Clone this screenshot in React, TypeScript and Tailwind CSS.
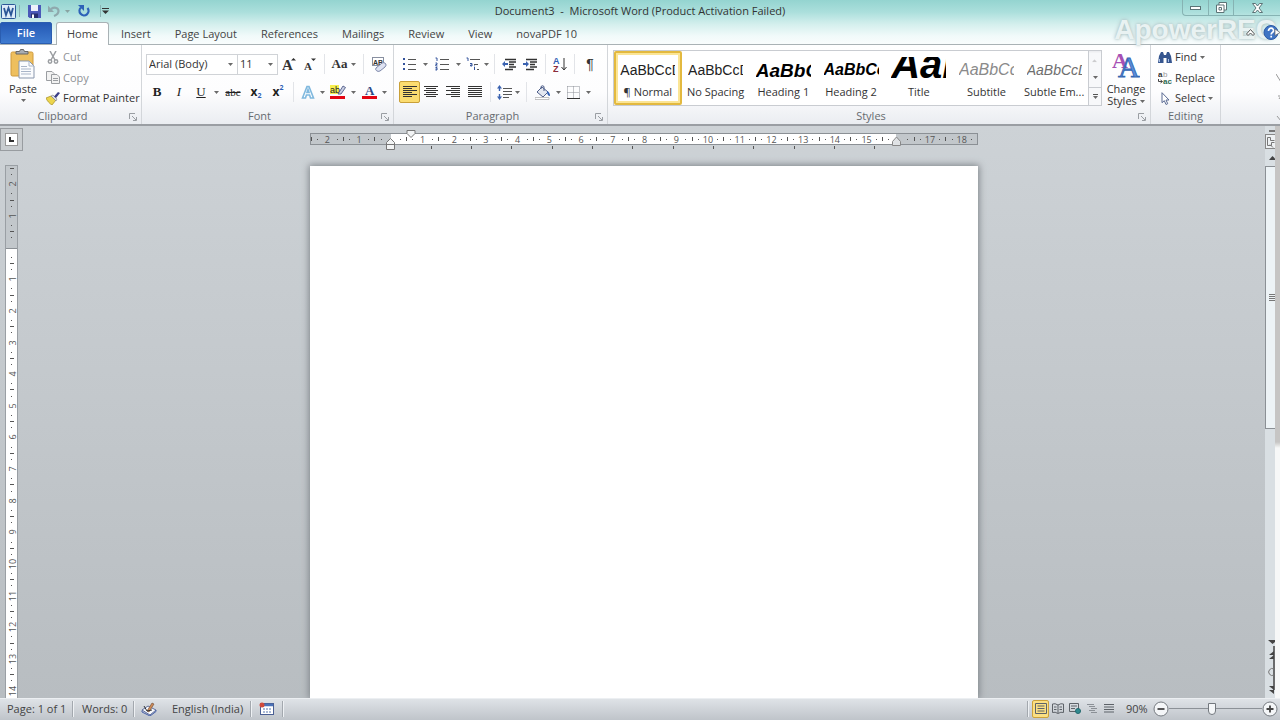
import type { ReactNode } from "react";
import clsx from "clsx";

const tabs = ["Insert", "Page Layout", "References", "Mailings", "Review", "View", "novaPDF 10"];

const styles = [
  { name: "¶ Normal", sample: "AaBbCcDd", look: "text-[14px] text-[#222]", active: true },
  { name: "No Spacing", sample: "AaBbCcDd", look: "text-[14px] text-[#222]" },
  { name: "Heading 1", sample: "AaBbCc", look: "text-[19px] font-bold italic text-black" },
  { name: "Heading 2", sample: "AaBbCc", look: "text-[16px] font-bold italic text-black" },
  { name: "Title", sample: "AaBb", look: "pb-3 text-[40px] font-bold italic text-black" },
  { name: "Subtitle", sample: "AaBbCc", look: "text-[16px] italic text-[#8a8a8a]" },
  { name: "Subtle Em...", sample: "AaBbCcDd", look: "text-[14px] italic text-[#6e6e6e]" },
];

const rulerLabels = ["2", "1", "", "1", "2", "3", "4", "5", "6", "7", "8", "9", "10", "11", "12", "13", "14", "15", "", "17", "18"];
const sideLabels = ["2", "1", "", "1", "2", "3", "4", "5", "6", "7", "8", "9", "10", "11", "12", "13", "14"];

const Caret = () => (
  <svg className="shrink-0" width="5" height="3" viewBox="0 0 5 3" aria-hidden="true">
    <path d="M0 0h5L2.500 3z" fill="#6a6a6a" />
  </svg>
);

const Sep = () => <span className="mx-1 h-5 w-px shrink-0 bg-[#e2e4e8]" />;

const Tool = ({ label, className, children }: { label: string; className?: string; children: ReactNode }) => (
  <button aria-label={label} className={clsx("flex h-[22px] shrink-0 items-center justify-center", className || "w-[22px]")}>
    {children}
  </button>
);

const DropArrow = ({ label, className }: { label: string; className?: string }) => (
  <Tool label={label} className={className || "w-[11px]"}>
    <Caret />
  </Tool>
);

const Launcher = () => (
  <button aria-label="More options" className="absolute right-1 bottom-[3px]">
    <svg width="8" height="8" viewBox="0 0 8 8" fill="none" stroke="#9a9ea3">
      <path d="M.5 6V.5H6M3 3l4 4M7.500 4v3.500H4" />
    </svg>
  </button>
);

type GroupProps = { title: string; launcher?: boolean; className?: string; body?: string; children: ReactNode };

const Group = ({ title, launcher = true, className, body, children }: GroupProps) => (
  <section className={clsx("relative flex h-full shrink-0 flex-col border-r border-[#d3d6da]", className)}>
    <div className={clsx("flex-1", body)}>{children}</div>
    <h2 className={clsx("h-4 text-center leading-4 text-[#666b70]", launcher && "pr-4")}>{title}</h2>
    {launcher && <Launcher />}
  </section>
);

const Lines = ({ rows }: { rows: [number, number][] }) => (
  <svg width="14" height="12" viewBox="0 0 14 12" stroke="#333" aria-hidden="true">
    {rows.map(([a, b], i) => (
      <path key={i} d={`M${a} ${i * 2 + 0.5}H${b}`} />
    ))}
  </svg>
);

const ListIcon = ({ kind }: { kind: "bullet" | "number" | "multi" }) => (
  <svg width="14" height="14" viewBox="0 0 14 14" aria-hidden="true">
    {kind === "bullet" && (
      <>
        <path d="M5 2.500h8M5 7.500h8M5 12.500h8" stroke="#555" />
        <path d="M0 1h2v2H0zM0 6h2v2H0zM0 11h2v2H0z" fill="#33539c" />
      </>
    )}
    {kind === "number" && (
      <>
        <path d="M5 2.500h9M5 7.500h9M5 12.500h9" stroke="#555" />
        <path d="M.5 1H2v3M.5 6H2v1.500H.8V9H2.500M.5 10.500H2V13H.5M.5 12H2" stroke="#33539c" fill="none" />
      </>
    )}
    {kind === "multi" && (
      <>
        <path d="M4 2.500h10M8 7.500h4M11 12.500h2" stroke="#555" />
        <path d="M.5 1H2v3M4 6.500h2v2.500H4.500V8H6M8.500 10v3M8.500 8.500v.8" stroke="#33539c" fill="none" />
      </>
    )}
  </svg>
);

const IndentIcon = ({ out }: { out?: boolean }) => (
  <svg width="15" height="13" viewBox="0 0 15 13" aria-hidden="true">
    <path d="M3 1.500h11M7 4h7M7 6.500h5M7 9h7M3 11.500h8" stroke="#333" strokeWidth="1.300" />
    {out ? <path d="M0 6l3-3v2h3v2H3v2z" fill="#3a62b0" /> : <path d="M6 6L3 3v2H0v2h3v2z" fill="#3a62b0" />}
  </svg>
);

const FontPicker = ({ label, value, className }: { label: string; value: string; className: string }) => (
  <div className={clsx("relative h-[21px] border border-[#d0d3d7] bg-white", className)}>
    <select aria-label={label} className="block h-full w-full appearance-none bg-transparent pl-[2px] outline-none">
      <option>{value}</option>
    </select>
    <span className="pointer-events-none absolute top-2 right-1">
      <Caret />
    </span>
  </div>
);

const TitleBar = () => (
  <div className="relative flex h-[22px] items-center">
    <div className="flex items-center pl-[1px]">
      <svg width="15" height="15" viewBox="0 0 15 15" aria-hidden="true">
        <rect x=".5" y=".5" width="14" height="14" rx="1" fill="#dcebf8" stroke="#2b5797" />
        <path d="M3 4l2 7 2.500-7L10 11l2-7" fill="none" stroke="#2b5797" strokeWidth="1.800" />
      </svg>
      <span className="mx-[3px] h-3 w-px bg-[#8ab5b5]" />
      <Tool label="Save">
        <svg width="13" height="13" viewBox="0 0 13 13">
          <path d="M0 0h13v13H1.500L0 11.500z" fill="#4a59b8" />
          <path d="M3 0h7v6H3z" fill="#eef2fb" />
          <path d="M3 8.500h7V13H3z" fill="#26306f" />
          <path d="M4 9.500h2V13H4z" fill="#fff" />
        </svg>
      </Tool>
      <Tool label="Undo" className="w-[18px]">
        <svg width="12" height="12" viewBox="0 0 12 12" fill="none">
          <path d="M3 4C7 1.500 10.500 3 10.500 6c0 2.500-2 4-4.500 5" stroke="#8fa9ad" strokeWidth="2.200" />
          <path d="M0 .5v6.500h6z" fill="#8fa9ad" />
        </svg>
      </Tool>
      <span className="opacity-50">
        <DropArrow label="Undo history" className="w-[9px]" />
      </span>
      <Tool label="Repeat" className="w-6">
        <svg width="12" height="13" viewBox="0 0 12 13" fill="none">
          <path d="M3 2.500A4.500 4.500 0 1 0 9.500 3" stroke="#2e62b8" strokeWidth="2.300" />
          <path d="M0 0h6v6z" fill="#2e62b8" />
        </svg>
      </Tool>
      <span className="ml-1 h-3 w-px bg-[#8ab5b5]" />
      <Tool label="Customize toolbar" className="w-2">
        <svg width="7" height="6" viewBox="0 0 7 6">
          <path d="M0 .5h7" stroke="#333" />
          <path d="M0 2.500h7L3.500 6z" fill="#333" />
        </svg>
      </Tool>
    </div>
    <h1 className="absolute inset-x-0 text-center whitespace-pre text-[#333]">Document3  -  Microsoft Word (Product Activation Failed)</h1>
    <div className="absolute top-0 right-0 flex h-4 w-[98px] rounded-bl border-b border-l border-[#86b3b3]">
      <button aria-label="Minimize" className="flex w-[26px] items-center justify-center border-r border-[#86b3b3]">
        <svg width="11" height="4" viewBox="0 0 11 4">
          <rect x=".5" y=".5" width="10" height="3" fill="#fff" stroke="#5c7376" />
        </svg>
      </button>
      <button aria-label="Restore" className="flex w-[25px] items-center justify-center border-r border-[#86b3b3]">
        <svg width="11" height="11" viewBox="0 0 11 11" fill="#fff" stroke="#5c7376">
          <path d="M3 .5h7.500V8H3z" />
          <path d="M.5 3H8v7.500H.5z" />
          <path d="M3 5.500h2.500V8H3z" />
        </svg>
      </button>
      <button aria-label="Close" className="flex flex-1 items-center justify-center">
        <svg width="11" height="10" viewBox="0 0 11 10">
          <path d="M.5.5h3l2 2.500 2-2.500h3L7 5l3.500 4.500h-3l-2-2.500-2 2.500h-3L4 5z" fill="#fff" stroke="#5c7376" />
        </svg>
      </button>
    </div>
  </div>
);

const TabRow = () => (
  <nav className="relative flex h-[23px] items-stretch border-b border-[#a9b2b5] text-[#444]">
    <button className="w-[52px] rounded-t-[2px] border border-[#2a5db0] bg-gradient-to-b from-[#2458b4] to-[#3f7bd0] font-semibold text-white">File</button>
    <button className="relative -mb-px ml-1 w-[53px] rounded-t-[3px] border border-b-0 border-[#a9b2b5] bg-white">Home</button>
    {tabs.map((tab) => (
      <button key={tab} className="px-3 pt-px">
        {tab}
      </button>
    ))}
    <div className="absolute right-0 bottom-1 flex items-center gap-2">
      <span
        aria-hidden="true"
        className="absolute right-1 -bottom-2 text-[28px] leading-9 font-bold text-[#e9f2f2] [font-family:'Liberation_Sans',sans-serif] [text-shadow:0_0_4px_#a9bfc1,0_0_2px_#bccfd0]"
      >
        ApowerREC
      </span>
      <button aria-label="Minimize the ribbon" className="relative">
        <svg width="9" height="7" viewBox="0 0 9 7">
          <path d="M.5 5l4-4.500 4 4.500-1.500 1.500-2.500-2.500L2 6.500z" fill="#fff" stroke="#555" />
        </svg>
      </button>
      <button aria-label="Help" className="relative">
        <svg width="17" height="15" viewBox="0 0 17 15">
          <circle cx="8" cy="7.500" r="7" fill="#3f74c4" stroke="#2b5aa5" />
          <path d="M5.500 6c0-4 5.500-3.500 5 0-.3 1.500-2.300 1.500-2.300 3.500M8.200 10.800v1.800" stroke="#fff" strokeWidth="1.700" fill="none" />
          <path d="M12 4l5 3.500-5 3z" fill="#fff" stroke="#666" strokeWidth=".7" />
        </svg>
      </button>
    </div>
  </nav>
);

const Clipboard = () => (
  <Group title="Clipboard" className="w-[142px]">
    <div className="flex">
      <button className="flex w-[46px] flex-col items-center pt-1 text-[#333]">
        <svg width="26" height="30" viewBox="0 0 26 30" aria-hidden="true">
          <rect x="1" y="3" width="22" height="24" rx="1.500" fill="#eebf5e" stroke="#cf9a3c" />
          <path d="M6 5V2.500h3.500L10.500.5h3l1 2H18V5z" fill="#a9adb2" stroke="#666" />
          <path d="M9 12h10l5 5v12H9z" fill="#fbfcfe" stroke="#8997ad" />
          <path d="M19 12v5h5M11 17.500h6M11 20h10M11 22.500h10M11 25h10" stroke="#a9b5c8" fill="none" />
        </svg>
        <span className="leading-5">Paste</span>
        <Caret />
      </button>
      <div className="flex flex-col pt-[2px] text-[#8e9296]">
        <button className="flex h-5 items-center gap-[3px]">
          <svg width="14" height="13" viewBox="0 0 14 13" fill="none" stroke="#9a9da1" strokeWidth="1.500">
            <path d="M4 0l5 9M10 0L5 9" />
            <circle cx="4" cy="10.500" r="1.700" />
            <circle cx="10" cy="10.500" r="1.700" />
          </svg>
          Cut
        </button>
        <button className="flex h-[21px] items-center gap-[3px]">
          <svg width="14" height="13" viewBox="0 0 14 13" fill="#f2f2f2" stroke="#9a9da1">
            <path d="M.5.5H6l2 2v7H.5z" />
            <path d="M5.500 3.500H11l2.500 2.500v6.500h-8zM7 7.500h5M7 9.500h5" />
          </svg>
          Copy
        </button>
        <button className="flex h-5 items-center gap-[3px] whitespace-nowrap text-[#333]">
          <svg width="14" height="13" viewBox="0 0 14 13">
            <path d="M0 6l5-2 5 4-4 5C4 12 1 9 0 6z" fill="#ecd54c" stroke="#a58b22" strokeWidth=".7" />
            <path d="M5 4l2-1 4 4-1 2z" fill="#d9dce6" stroke="#777" strokeWidth=".6" />
            <path d="M8 4.500L12 0l2 1-4 5z" fill="#3b3f88" />
          </svg>
          Format Painter
        </button>
      </div>
    </div>
  </Group>
);

const FontGroup = () => (
  <Group title="Font" className="w-[252px]" body="pl-1">
    <div className="flex items-center pt-2">
      <FontPicker label="Font" value="Arial (Body)" className="w-[92px]" />
      <FontPicker label="Font size" value="11" className="w-[40px] border-l-0" />
      <Tool label="Grow font" className="w-[22px]">
        <svg width="14" height="15" viewBox="0 0 14 15">
          <text x="0" y="13" fontSize="15" fontWeight="bold" fill="#333" fontFamily="Liberation Serif">A</text>
          <path d="M9 3.500L11.500 1 14 3.500z" fill="#333" />
        </svg>
      </Tool>
      <Tool label="Shrink font" className="w-[20px]">
        <svg width="13" height="15" viewBox="0 0 13 15">
          <text x="0" y="13" fontSize="11" fontWeight="bold" fill="#333" fontFamily="Liberation Serif">A</text>
          <path d="M7 1.500h5L9.500 4z" fill="#333" />
        </svg>
      </Tool>
      <Sep />
      <Tool label="Change case" className="w-[30px] gap-1">
        <span className="text-[13px] font-bold [font-family:'Liberation_Serif',serif]">Aa</span>
        <Caret />
      </Tool>
      <Sep />
      <Tool label="Clear formatting">
        <svg width="16" height="15" viewBox="0 0 16 15">
          <rect x="1.500" y=".5" width="11" height="8" fill="#fff" stroke="#888fa0" />
          <text x="2" y="7.500" fontSize="7" fontWeight="bold" fill="#333" fontFamily="Liberation Sans">AB</text>
          <path d="M5 11l6-5q2-1 3.500.5T14 10l-5 4q-2 1-3.500-.3T5 11z" fill="#dfe3f2" stroke="#7b86a8" />
        </svg>
      </Tool>
    </div>
    <div className="flex items-center pt-[6px] text-[13px] text-[#222]">
      <Tool label="Bold">
        <span className="font-bold [font-family:'Liberation_Serif',serif]">B</span>
      </Tool>
      <Tool label="Italic">
        <span className="italic [font-family:'Liberation_Serif',serif]">I</span>
      </Tool>
      <Tool label="Underline">
        <span className="underline [font-family:'Liberation_Serif',serif]">U</span>
      </Tool>
      <DropArrow label="Underline style" className="w-[9px]" />
      <Tool label="Strikethrough" className="w-6">
        <span className="text-[11px] line-through [font-family:'Liberation_Serif',serif]">abc</span>
      </Tool>
      <Tool label="Subscript">
        <b className="text-[12px]">x</b>
        <span className="mt-2 text-[7px] font-bold text-[#2f5fb5]">2</span>
      </Tool>
      <Tool label="Superscript">
        <b className="text-[12px]">x</b>
        <span className="mb-2 text-[7px] font-bold text-[#2f5fb5]">2</span>
      </Tool>
      <Sep />
      <Tool label="Text effects" className="w-5">
        <svg width="14" height="15" viewBox="0 0 14 15">
          <path d="M1.500 13L6 1.500h2L12.500 13h-3L8.600 10H5.400l-.9 3zM6 7.500h2L7 4.500z" fill="#fff" stroke="#7fb8de" strokeWidth="1.600" />
        </svg>
      </Tool>
      <DropArrow label="More text effects" className="w-[9px]" />
      <Tool label="Highlight" className="w-[22px]">
        <svg width="16" height="15" viewBox="0 0 16 15">
          <rect width="9" height="9" fill="#f6ef4f" />
          <text x="0" y="8" fontSize="9" fill="#222" fontFamily="Liberation Sans">ab</text>
          <path d="M8 9l5-8 2.500 1.500L11 9z" fill="#c9cfe2" stroke="#3e4a7c" strokeWidth=".8" />
          <rect y="11" width="15" height="3" fill="#e30613" />
        </svg>
      </Tool>
      <DropArrow label="Highlight colors" className="w-[9px]" />
      <Tool label="Font color">
        <svg width="15" height="15" viewBox="0 0 15 15">
          <text x="3" y="10" fontSize="13" fontWeight="bold" fill="#2c4a86" fontFamily="Liberation Serif">A</text>
          <rect y="11" width="15" height="3" fill="#e30613" />
        </svg>
      </Tool>
      <DropArrow label="Font colors" className="w-[9px]" />
    </div>
  </Group>
);

const ParagraphGroup = () => (
  <Group title="Paragraph" className="w-[214px]" body="pl-[5px]">
    <div className="flex items-center pt-2">
      <Tool label="Bullets">
        <ListIcon kind="bullet" />
      </Tool>
      <DropArrow label="Bullet library" className="w-[9px]" />
      <Tool label="Numbering" className="w-6">
        <ListIcon kind="number" />
      </Tool>
      <DropArrow label="Numbering library" className="w-[9px]" />
      <Tool label="Multilevel list" className="w-5">
        <ListIcon kind="multi" />
      </Tool>
      <DropArrow label="List library" className="w-[7px]" />
      <Sep />
      <Tool label="Decrease indent" className="w-[21px]">
        <IndentIcon out />
      </Tool>
      <Tool label="Increase indent" className="w-[21px]">
        <IndentIcon />
      </Tool>
      <Sep />
      <Tool label="Sort" className="w-5">
        <svg width="14" height="15" viewBox="0 0 14 15">
          <text x="0" y="7" fontSize="9" fontWeight="bold" fill="#2f5fb5" fontFamily="Liberation Sans">A</text>
          <text x="0" y="15" fontSize="9" fontWeight="bold" fill="#8b2d3a" fontFamily="Liberation Sans">Z</text>
          <path d="M11 1v11M8.500 10l2.500 3 2.500-3" stroke="#333" fill="none" />
        </svg>
      </Tool>
      <Sep />
      <Tool label="Show marks">
        <span className="text-[14px] text-[#333] [font-family:'Liberation_Sans',sans-serif]">¶</span>
      </Tool>
    </div>
    <div className="flex items-center pt-[6px]">
      <Tool label="Align left" className="w-[21px] rounded-[2px] border border-[#c9a038] bg-[#fbdc70]">
        <Lines rows={[[0, 14], [0, 9], [0, 14], [0, 9], [0, 14], [0, 9]]} />
      </Tool>
      <Tool label="Center">
        <Lines rows={[[0, 14], [2, 12], [0, 14], [2, 12], [0, 14], [2, 12]]} />
      </Tool>
      <Tool label="Align right">
        <Lines rows={[[0, 14], [5, 14], [0, 14], [5, 14], [0, 14], [5, 14]]} />
      </Tool>
      <Tool label="Justify">
        <Lines rows={[[0, 14], [0, 14], [0, 14], [0, 14], [0, 14], [0, 14]]} />
      </Tool>
      <Sep />
      <Tool label="Line spacing" className="w-[18px]">
        <svg width="15" height="15" viewBox="0 0 15 15">
          <path d="M6 3.500h9M6 6.500h9M6 9.500h9M6 12.500h6" stroke="#555" />
          <path d="M2.500 0L5 3.500H3.200v2.500H1.800V3.500H0zM2.500 15L0 11.500h1.800V9h1.400v2.500H5z" fill="#3a62b0" />
        </svg>
      </Tool>
      <DropArrow label="Line spacing options" className="w-[9px]" />
      <Sep />
      <Tool label="Shading" className="w-6">
        <svg width="16" height="15" viewBox="0 0 16 15">
          <path d="M2 7l5-5 6 5-5 5z" fill="#e4e8f1" stroke="#4d5d88" />
          <path d="M6 4V1.500q1.500-1.500 3 0V6" fill="none" stroke="#4d5d88" />
          <path d="M12 6q3 1 3 5-3 0-3-5z" fill="#2f5fb5" />
          <path d="M0 12.500h14v2H0z" fill="#fff" stroke="#aaa" strokeWidth=".7" />
        </svg>
      </Tool>
      <DropArrow label="Shading colors" className="w-[7px]" />
      <Tool label="Borders">
        <svg width="13" height="13" viewBox="0 0 13 13" stroke="#8a8f96" fill="none">
          <path d="M.5.5h12v12M.5.5v12M6.500.5v12M.5 6.500h12" strokeDasharray="1 1" />
          <path d="M0 12.500h13" stroke="#333" />
        </svg>
      </Tool>
      <DropArrow label="Border options" className="w-[9px]" />
    </div>
  </Group>
);

const StylesGroup = () => (
  <Group title="Styles" className="min-w-0 flex-1 basis-[543px]" body="pt-[5px] pl-[5px]">
    <div className="flex">
      <div className="flex h-[56px] min-w-0 flex-1 border border-[#c9ccd1] bg-white">
        {styles.map((s) => (
          <button
            key={s.name}
            className={clsx(
              "flex min-w-0 flex-1 flex-col items-center overflow-hidden rounded-[2px] border-2",
              s.active ? "border-[#e3b93f] shadow-[inset_0_0_0_2px_#fbe596]" : "border-transparent"
            )}
          >
            <span className={clsx("mt-1 flex h-[26px] w-[55px] items-center overflow-hidden leading-none [font-family:'Liberation_Sans',sans-serif]", s.look)}>
              {s.sample}
            </span>
            <span className="mt-px leading-4 whitespace-nowrap text-[#333]">{s.name}</span>
          </button>
        ))}
        <div className="flex w-[13px] flex-col divide-y divide-[#c9ccd1] border-l border-[#c9ccd1] bg-[#f7f8fa]">
          <button aria-label="Previous styles" className="flex flex-1 rotate-180 items-center justify-center opacity-30">
            <Caret />
          </button>
          <button aria-label="Next styles" className="flex flex-1 items-center justify-center">
            <Caret />
          </button>
          <button aria-label="All styles" className="flex flex-1 flex-col items-center justify-center gap-px">
            <span className="h-px w-[5px] bg-[#555]" />
            <Caret />
          </button>
        </div>
      </div>
      <button className="flex w-[48px] flex-col items-center leading-3 text-[#333]">
        <svg width="28" height="29" viewBox="0 0 28 29" aria-hidden="true">
          <text x="0" y="18" fontSize="22" fontWeight="bold" fill="#a650b4" fontFamily="Liberation Serif">A</text>
          <text x="6" y="27" fontSize="30" fill="#5b8fdb" stroke="#3466b2" strokeWidth=".9" fontFamily="Liberation Serif">A</text>
        </svg>
        <span className="mt-1">Change</span>
        <span className="flex items-center gap-[3px]">
          Styles <Caret />
        </span>
      </button>
    </div>
  </Group>
);

const EditingGroup = () => (
  <Group title="Editing" launcher={false} className="w-[70px]" body="pt-[2px] pl-[7px]">
    <button className="flex h-5 items-center gap-[3px] text-[#333]">
      <svg width="14" height="13" viewBox="0 0 14 13">
        <path d="M1 5l2-4h2l1 3h2l1-3h2l2 4 1 7H8.500V7h-3v5H0z" fill="#36568f" />
        <path d="M1.500 8v3M10.500 8v3" stroke="#a9c0e6" />
      </svg>
      Find
      <Caret />
    </button>
    <button className="flex h-[21px] items-center gap-[3px] text-[#333]">
      <svg width="14" height="13" viewBox="0 0 14 13">
        <text x="0" y="6" fontSize="8" fontWeight="bold" fill="#333" fontFamily="Liberation Sans">a</text>
        <text x="5" y="6" fontSize="8" fill="#999" fontFamily="Liberation Sans">b</text>
        <text x="5" y="13" fontSize="8" fontWeight="bold" fill="#2d6b52" fontFamily="Liberation Sans">ac</text>
        <path d="M.5 8v2.500H4M2.500 9l2 1.500-2 1.500" stroke="#333" fill="none" strokeWidth=".9" />
      </svg>
      Replace
    </button>
    <button className="flex h-5 items-center gap-[3px] text-[#333]">
      <svg width="14" height="13" viewBox="0 0 14 13">
        <path d="M4 .7v10l2.300-2 1.700 3.800 1.700-.8L8 8h3z" fill="#fff" stroke="#5b6b93" />
      </svg>
      Select
      <Caret />
    </button>
  </Group>
);

const StatusSep = () => <span className="h-4 w-px bg-[#a3a8ae] shadow-[1px_0_0_#eef1f4]" />;

const ViewButton = ({ label, active, children }: { label: string; active?: boolean; children: ReactNode }) => (
  <button aria-label={label} className={clsx("flex h-[18px] w-[17px] items-center justify-center rounded-[2px]", active && "border border-[#cda23b] bg-[#fbdf83]")}>
    <svg width="12" height="11" viewBox="0 0 12 11" fill="none" stroke="#5d6268">
      {children}
    </svg>
  </button>
);

const StatusBar = () => (
  <footer className="flex h-[22px] shrink-0 items-center border-t border-[#eceff2] bg-gradient-to-b from-[#dfe3e7] to-[#bfc4ca] pb-[2px] text-[#444]">
    <span className="w-[72px] pl-[7px]">Page: 1 of 1</span>
    <StatusSep />
    <span className="w-[60px] pl-[9px]">Words: 0</span>
    <StatusSep />
    <button aria-label="Proofing" className="ml-[7px]">
      <svg width="16" height="14" viewBox="0 0 16 14">
        <path d="M1 8l6-4 8 4-6 5z" fill="#f7f8fb" stroke="#5d6d9d" />
        <path d="M1 8.500v1.500l8 4 6-4.500V8" fill="none" stroke="#4760a8" />
        <path d="M6 9l5-8 2 1-5 8z" fill="#cf8a56" stroke="#6b4a33" strokeWidth=".6" />
        <path d="M3 4l3 5 5-1" stroke="#333" fill="none" />
      </svg>
    </button>
    <span className="ml-[15px] w-[78px]">English (India)</span>
    <StatusSep />
    <button aria-label="Record macro" className="mx-2">
      <svg width="15" height="13" viewBox="0 0 15 13">
        <rect x="1.500" y="1.500" width="13" height="11" fill="#fff" stroke="#4a5f94" />
        <path d="M2 3h12" stroke="#4a72b8" strokeWidth="2.500" />
        <path d="M4 7h2m1 0h2m1 0h2M4 10h2m1 0h2m1 0h2" stroke="#8fa4cc" strokeWidth="1.500" />
        <circle cx="3" cy="3" r="2.500" fill="#cf4a3c" />
      </svg>
    </button>
    <StatusSep />
    <div className="ml-auto flex items-center">
      <StatusSep />
      <div className="ml-1 flex">
        <ViewButton label="Print layout" active>
          <path d="M.5.5h11v10H.5zM2.500 3h7M2.500 5.500h7M2.500 8h7" />
        </ViewButton>
        <ViewButton label="Full screen reading">
          <path d="M6 2Q3 0 .5 1v8.500Q3 8.500 6 10.500q3-2 5.500-1V1Q9 0 6 2zv8M2 4h2.500M2 6.500h2.500M7.500 4H10M7.500 6.500H10" />
        </ViewButton>
        <ViewButton label="Web layout">
          <path d="M.5.5h9v8h-9zM2 3h6M2 5.500h4" />
          <circle cx="9" cy="8" r="2.500" fill="#2f8a90" stroke="#24696e" />
        </ViewButton>
        <ViewButton label="Outline">
          <path d="M1 1.500h7M3 3.500h6M5 5.500h6M3 7.500h6M5 9.500h6" stroke="#8b9096" />
        </ViewButton>
        <ViewButton label="Draft">
          <path d="M1 1.500h10M1 4h10M1 6.500h10M1 9h10" />
        </ViewButton>
      </div>
      <span className="w-9 pl-[9px]">90%</span>
      <button aria-label="Zoom out">
        <svg width="16" height="16" viewBox="0 0 16 16">
          <circle cx="8" cy="8" r="7" fill="#f4f6f8" stroke="#777c82" />
          <path d="M4.500 8h7" stroke="#444" strokeWidth="1.800" />
        </svg>
      </button>
      <input
        type="range"
        aria-label="Zoom"
        min={10}
        max={190}
        defaultValue={92}
        className="h-4 w-[93px] appearance-none bg-[linear-gradient(#8c9197,#8c9197)] bg-[length:100%_1px] bg-center bg-no-repeat [&::-webkit-slider-thumb]:h-3 [&::-webkit-slider-thumb]:w-2 [&::-webkit-slider-thumb]:appearance-none [&::-webkit-slider-thumb]:rounded-b-[4px] [&::-webkit-slider-thumb]:border [&::-webkit-slider-thumb]:border-[#73787e] [&::-webkit-slider-thumb]:bg-[#f4f6f8]"
      />
      <button aria-label="Zoom in" className="mr-[2px]">
        <svg width="16" height="16" viewBox="0 0 16 16">
          <circle cx="8" cy="8" r="7" fill="#f4f6f8" stroke="#777c82" />
          <path d="M4.500 8h7M8 4.500v7" stroke="#444" strokeWidth="1.800" />
        </svg>
      </button>
    </div>
  </footer>
);

const TopRuler = () => (
  <div className="relative mt-[7px] h-[12px] w-[668px] border border-[#8b9095] bg-[linear-gradient(90deg,#c2c7cb_80px,#fff_80px,#fff_585px,#c2c7cb_585px)]">
    <div className="flex h-full items-center text-[9px] leading-none text-[#555]">
      {rulerLabels.map((n, i) => (
        <div key={i} className="flex min-w-0 flex-1 items-center justify-between">
          <i className="h-1 w-px bg-[#555]" />
          <i className="size-px bg-[#555]" />
          <span className="flex w-2 justify-center">{n}</span>
          <i className="size-px bg-[#555]" />
          <i className="w-0" />
        </div>
      ))}
    </div>
    {/* indent markers and default tab stops hang over the ruler edge */}
    <svg className="absolute -top-2 -left-px overflow-visible" width="668" height="28" viewBox="0 0 668 28" aria-hidden="true">
      <path d="M97 4.500h8v3l-4 4-4-4z" fill="#f2f4f5" stroke="#777" />
      <path d="M76.500 23.500h8v-7l-4-4-4 4zM76.500 18.500h8" fill="#f2f4f5" stroke="#777" />
      <path d="M582.500 15.500l4-4.500 4 4.500v4h-8z" fill="#dfe2e5" stroke="#888" />
      <path d="M121.500 20v3M161.500 20v3M201.500 20v3M242.500 20v3M282.500 20v3M322.500 20v3M363.500 20v3M403.500 20v3M443.500 20v3M484.500 20v3M524.500 20v3M564.500 20v3" stroke="#555" />
    </svg>
  </div>
);

const SideRuler = () => (
  <div className="mt-[14px] ml-[5px] min-h-0 w-[13px] flex-1 overflow-hidden border border-b-0 border-[#9a9fa4] bg-[linear-gradient(#c2c7cb_82px,#8b9095_82px,#8b9095_83px,#fff_83px)]">
    <div className="mt-[2px] flex h-[538px] flex-col text-[9px] leading-none text-[#555]">
      {sideLabels.map((n, i) => (
        <div key={i} className="flex min-h-0 flex-1 flex-col items-center justify-between">
          <i className="h-px w-1 bg-[#555]" />
          <i className="size-px bg-[#555]" />
          <span className="flex h-2 w-3 -rotate-90 items-center justify-center">{n}</span>
          <i className="size-px bg-[#555]" />
          <i className="h-0" />
        </div>
      ))}
    </div>
  </div>
);

const ScrollBar = () => (
  <div className="flex w-[10px] shrink-0 flex-col bg-[#d9dfe3]">
    <span className="mt-1 ml-1 h-[2px] bg-[#777]" />
    <button aria-label="Toggle ruler" className="mt-[2px] h-[15px] border border-r-0 border-[#888] bg-[#eef1f3]">
      <svg width="9" height="12" viewBox="0 0 9 12" fill="none" stroke="#777">
        <path d="M1.500 1.500h3v3h4M1.500 1.500v8h4v-3h3M4 8.500l3 3" />
      </svg>
    </button>
    <button aria-label="Scroll up" className="flex h-[17px] items-center pl-1">
      <svg width="6" height="4" viewBox="0 0 6 4">
        <path d="M0 4l3.500-4L6 2.500V4z" fill="#444" />
      </svg>
    </button>
    <div className="flex h-[263px] flex-col items-end justify-center gap-px border border-r-0 border-[#8b9095] bg-[#edf3f6]">
      <i className="h-px w-[6px] bg-[#777]" />
      <i className="h-px w-[6px] bg-[#777]" />
      <i className="h-px w-[6px] bg-[#777]" />
      <i className="h-px w-[6px] bg-[#777]" />
    </div>
    <div className="flex-1" />
    <svg width="10" height="58" viewBox="0 0 10 58" fill="#444" aria-hidden="true">
      <path d="M3 0h7v2L7.500 4zM4 15l5-4v4zM4 19l5-4v4zM4 46h5v4zM4 50h5v4z" />
      <path d="M9 6v44" stroke="#444" strokeWidth="1.500" />
      <path d="M9 29a3.500 3.500 0 1 0 0 6" fill="none" stroke="#777" />
    </svg>
  </div>
);

const App = () => (
  <div className="flex h-screen flex-col overflow-hidden bg-[#c7ccd0] text-[11px] leading-4 text-[#333] [font-family:'Open_Sans',sans-serif]">
    <header className="shrink-0 bg-[linear-gradient(#94d4d0_0px,#abdfdc_12px,#d3efed_24px,#f1fafa_36px,#fafdfd_45px)]">
      <TitleBar />
      <TabRow />
      <div className="flex h-[81px] border-b-2 border-[#9a9ea3] bg-[linear-gradient(#fff_0%,#fdfdfe_60%,#eaedf1_100%)]">
        <Clipboard />
        <FontGroup />
        <ParagraphGroup />
        <StylesGroup />
        <EditingGroup />
        <div className="flex w-[60px] shrink-0 justify-end">
          <svg width="5" height="78" viewBox="0 0 5 78" fill="none" stroke="#999" aria-hidden="true">
            <path d="M0 29l5 8M2 51h3l-2 3M1 71l4 5M5 70v4" />
          </svg>
        </div>
      </div>
    </header>

    <main className="flex min-h-0 flex-1 bg-gradient-to-b from-[#cdd2d6] to-[#b8bdc1]">
      <div className="flex w-[23px] shrink-0 flex-col">
        <button aria-label="Tab selector" className="mt-[2px] flex size-[23px] shrink-0 items-center justify-center border border-[#989ca0] bg-[#c9cdd0]">
          <span className="flex size-[13px] items-center justify-center border border-[#999] bg-white">
            <span className="size-[5px] border-b-2 border-l-2 border-[#333]" />
          </span>
        </button>
        <SideRuler />
      </div>
      <div className="flex min-w-0 flex-1 flex-col items-center">
        <TopRuler />
        <div className="mt-[21px] w-[668px] flex-1 bg-white shadow-[0_0_7px_1px_#7d8388]" role="textbox" aria-label="Document" />
      </div>
      <ScrollBar />
      <div className="w-[5px] shrink-0 bg-[linear-gradient(#c6c5c4_316px,#f7f8f8_322px)]" />
    </main>

    <StatusBar />
  </div>
);

export default App;
